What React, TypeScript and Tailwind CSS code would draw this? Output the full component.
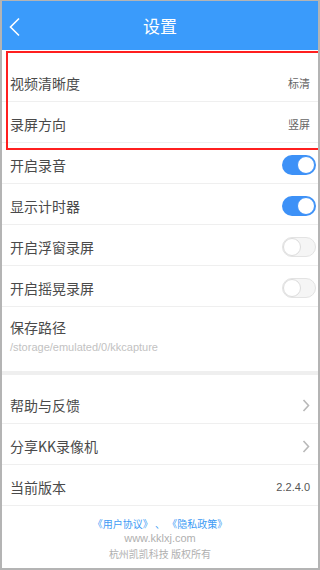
const cjk = "font-['Noto_Sans_CJK_SC','Noto_Sans',sans-serif]"

function Toggle({ on }: { on: boolean }) {
  return on ? (
    <div className="flex h-[20px] w-[34px] items-center justify-end rounded-full bg-[#3d91f7] p-px">
      <div className="h-[18px] w-[18px] rounded-full border border-[#3d91f7] bg-white" />
    </div>
  ) : (
    <div className="flex h-[20px] w-[34px] items-center rounded-full border border-[#e3e3e3] bg-[#f5f5f5]">
      <div className="h-[18px] w-[18px] rounded-full border border-[#dcdcdc] bg-white" />
    </div>
  )
}

function Chevron() {
  return (
    <svg width="8" height="13" viewBox="0 0 8 13" fill="none">
      <polyline points="1.5,1 6.5,6.5 1.5,12" stroke="#b9b9b9" strokeWidth="1.6" />
    </svg>
  )
}

function Row({ label, children }: { label: string; children?: React.ReactNode }) {
  return (
    <div className="flex h-[41px] items-center justify-between border-b border-[#efefef] pt-1 pl-[8px] pr-[8px]">
      <span className="text-[14px] text-[#4a4a4a]">{label}</span>
      {children}
    </div>
  )
}

export default function App() {
  return (
    <div className={`relative h-[570px] w-[320px] overflow-hidden border-x-2 border-t border-b-2 border-[#b4b4b4] bg-white ${cjk}`}>
      <header className="relative flex h-[49px] items-center justify-center bg-[#3a9bfb]">
        <svg className="absolute left-[6px] top-[16px]" width="14" height="20" viewBox="0 0 14 20" fill="none">
          <polyline points="11,1.5 2.5,10 11,18.5" stroke="white" strokeWidth="1.6" />
        </svg>
        <h1 className="text-[17px] text-white">设置</h1>
      </header>

      <div className="h-[11px]" />
      <Row label="视频清晰度">
        <span className="text-[11px] text-[#666]">标清</span>
      </Row>
      <Row label="录屏方向">
        <span className="text-[11px] text-[#666]">竖屏</span>
      </Row>
      <Row label="开启录音">
        <div className="-mr-[6px]"><Toggle on /></div>
      </Row>
      <Row label="显示计时器">
        <div className="-mr-[6px]"><Toggle on /></div>
      </Row>
      <Row label="开启浮窗录屏">
        <div className="-mr-[6px]"><Toggle on={false} /></div>
      </Row>
      <Row label="开启摇晃录屏">
        <div className="-mr-[6px]"><Toggle on={false} /></div>
      </Row>

      <div className="flex h-[64px] flex-col pl-[8px] pt-[9px]">
        <span className="text-[14px] leading-[22px] text-[#4a4a4a]">保存路径</span>
        <span className="mt-[1px] font-['Liberation_Sans',sans-serif] text-[11px] text-[#c2c2c2]">
          /storage/emulated/0/kkcapture
        </span>
      </div>
      <div className="h-[4px] bg-[#efefef]" />

      <div className="h-[8px]" />
      <Row label="帮助与反馈">
        <Chevron />
      </Row>
      <Row label="分享KK录像机">
        <Chevron />
      </Row>
      <Row label="当前版本">
        <span className="font-['Liberation_Sans',sans-serif] text-[11px] text-[#555]">2.2.4.0</span>
      </Row>

      <footer className="flex flex-col items-center pt-[10px] text-[10px] leading-[15px]">
        <span className="text-[#3d9bf5]">《用户协议》 、 《隐私政策》</span>
        <span className="font-['Liberation_Sans',sans-serif] text-[11px] text-[#b0b0b0]">www.kklxj.com</span>
        <span className="text-[#b0b0b0]">杭州凯凯科技 版权所有</span>
      </footer>

      <div className="pointer-events-none absolute left-[4px] top-[50px] h-[99px] w-[314px] border-2 border-[#ff1f1f]" />
    </div>
  )
}
